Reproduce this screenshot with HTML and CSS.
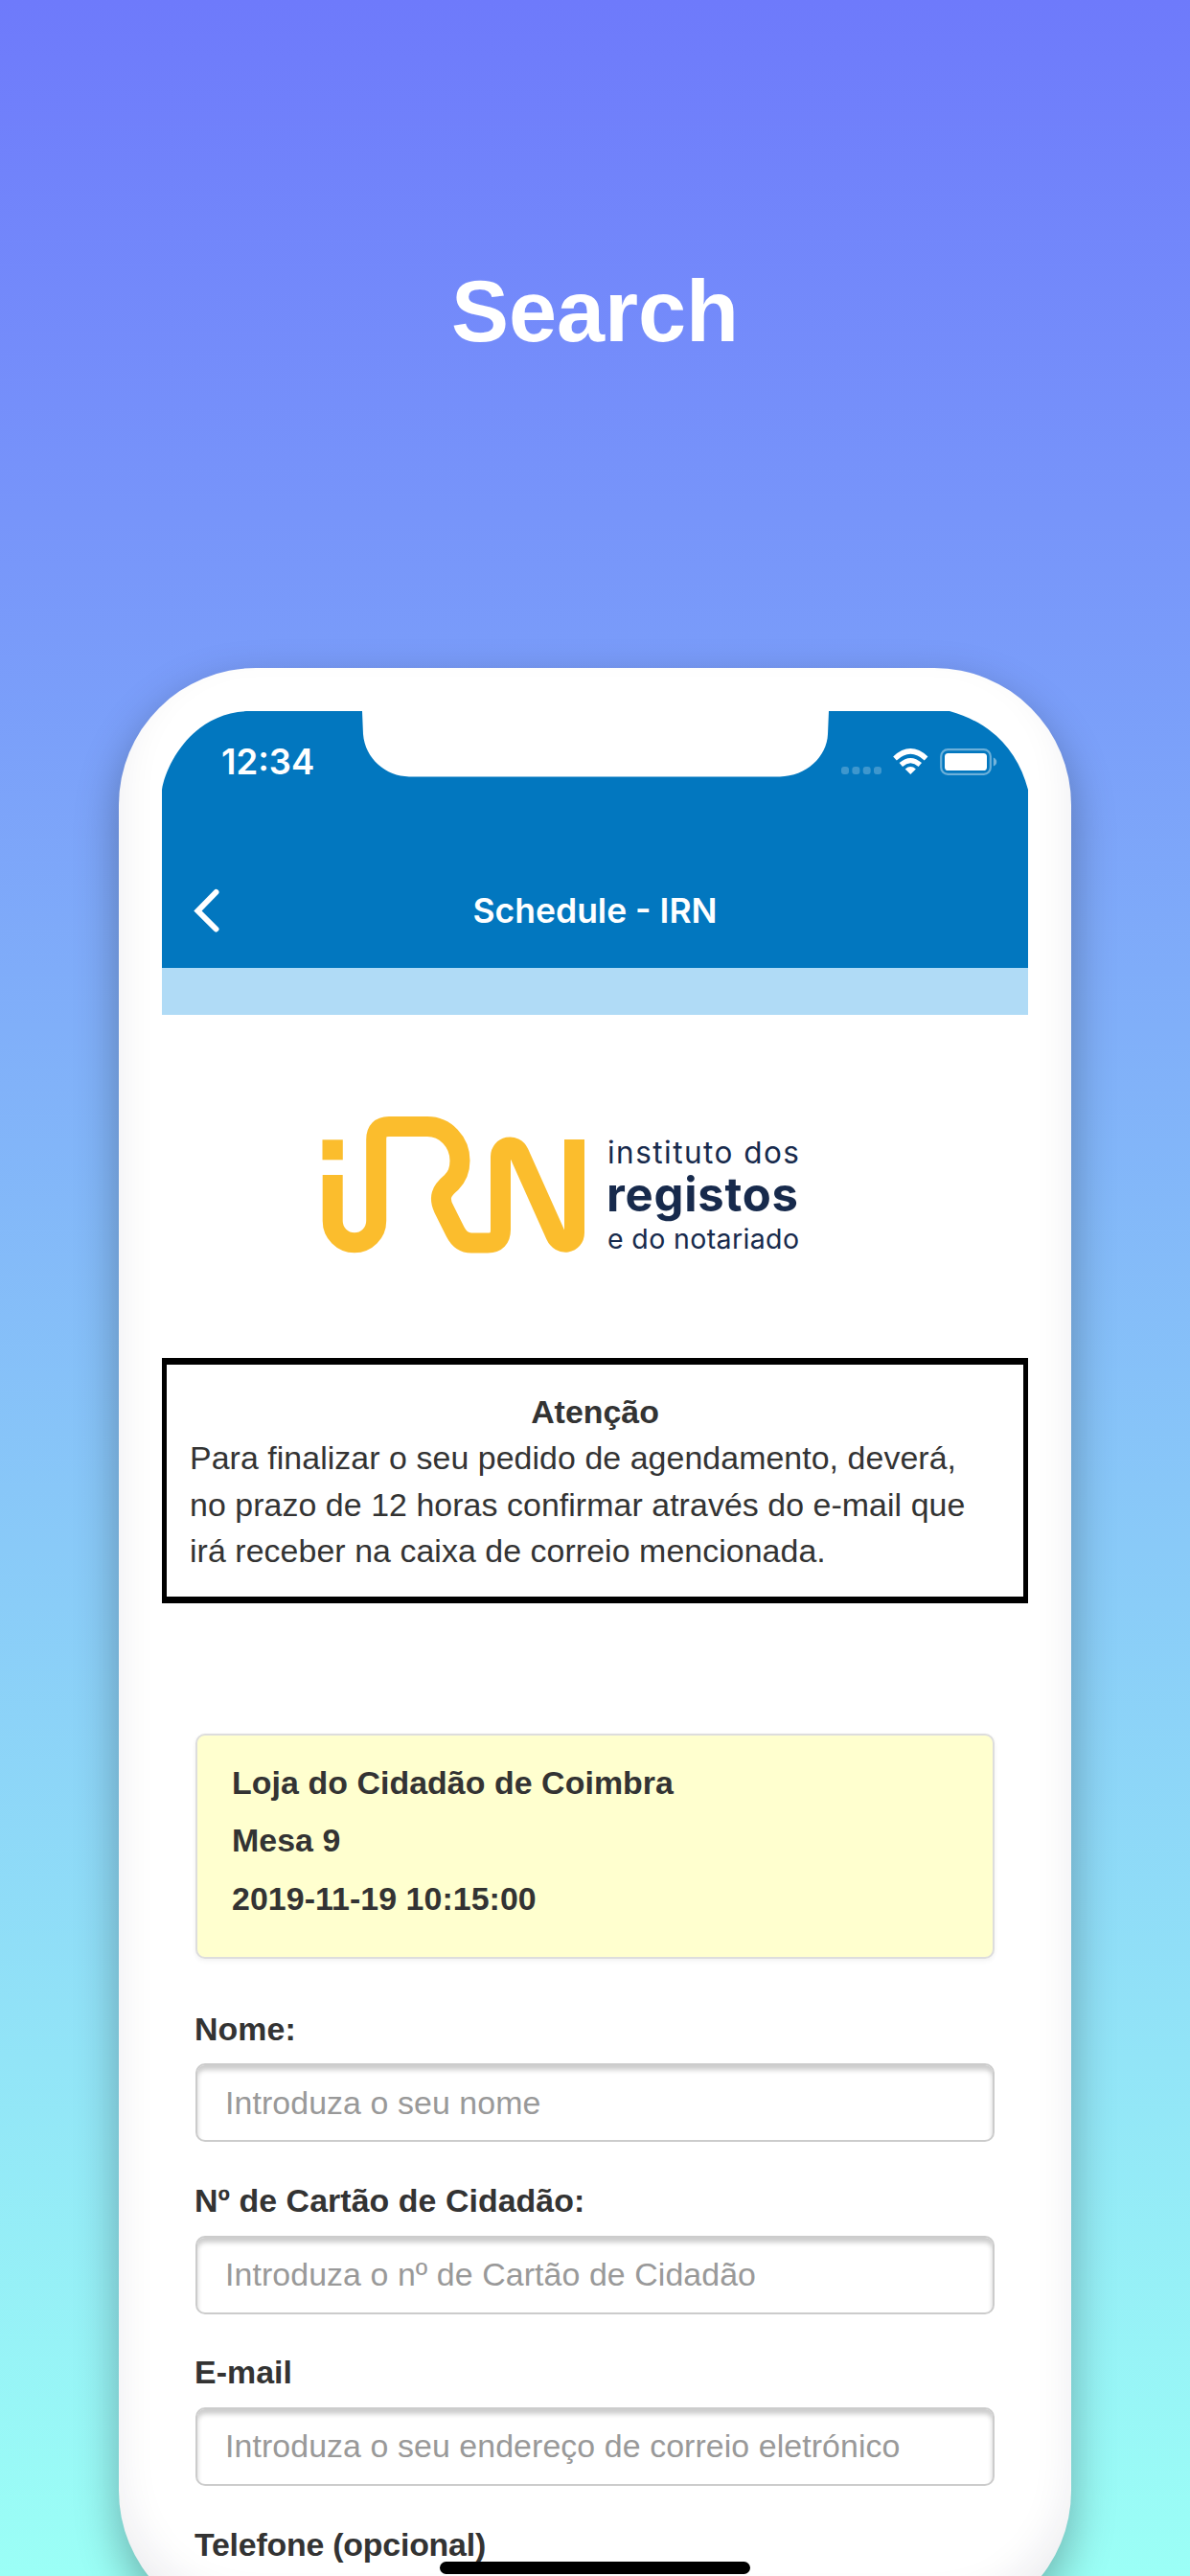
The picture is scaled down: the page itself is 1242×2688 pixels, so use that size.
FILE: index.html
```html
<!DOCTYPE html>
<html lang="pt">
<head>
<meta charset="utf-8">
<title>Schedule - IRN</title>
<link rel="stylesheet" href="styles.css">
</head>
<body>
<main class="stage">
  <h1 class="headline">Search</h1>
  <div class="phone">
    <div class="screen">
      <header class="topbar">
        <div class="status">
          <span class="clock">12:34</span>
          <svg class="status-icons" width="164" height="30" viewBox="0 0 164 30" aria-hidden="true">
            <g fill="#fff" fill-opacity=".24">
              <rect x="1" y="20" width="8" height="8" rx="3"/>
              <rect x="12.4" y="20" width="8" height="8" rx="3"/>
              <rect x="23.7" y="20" width="8" height="8" rx="3"/>
              <rect x="35" y="20" width="8" height="8" rx="3"/>
            </g>
            <path d="M73.300 28 L67.700 22.400 Q73.300 17.600 78.900 22.400 Z" fill="#fff"/>
            <path d="M63.300 18 Q73.300 9.200 83.300 18" fill="none" stroke="#fff" stroke-width="5.200"/>
            <path d="M57 11.400 Q73.300 -3.600 89.600 11.400" fill="none" stroke="#fff" stroke-width="5.400"/>
            <rect x="105.200" y="2.200" width="51.600" height="25.600" rx="7" fill="none" stroke="#fff" stroke-opacity=".42" stroke-width="2.200"/>
            <rect x="109" y="6" width="44" height="18" rx="3.600" fill="#fff"/>
            <path d="M159.800 10.500 Q163.200 12 163.200 15 Q163.200 18 159.800 19.500 Z" fill="#fff" fill-opacity=".45"/>
          </svg>
        </div>
        <div class="navbar">
          <svg class="back" width="30" height="48" viewBox="0 0 30 48" aria-hidden="true">
            <path d="M24.500 4 L5.500 23.500 L24.500 42.500" fill="none" stroke="#fff" stroke-width="6" stroke-linecap="round" stroke-linejoin="miter"/>
          </svg>
          <h2 class="nav-title">Schedule - IRN</h2>
        </div>
      </header>
      <div class="band"></div>
      <svg class="logo" width="904" height="358" viewBox="169 1059 904 358" role="img" aria-label="IRN">
        <g class="logo-mark">
          <path d="M336.500 1199.800 H357.800"/>
          <path d="M347.200 1226 V1274 A22.700 22.700 0 0 0 392.700 1274 V1189 Q392.700 1175.500 406 1175.500 H446 A34 35.500 0 0 1 480 1211 C480 1222 477 1228 471 1234 C460 1243 458 1250 463 1261 L475 1285 Q481 1297 492 1297 H509 Q522.500 1297 522.500 1283 V1207 C522.500 1196 537 1193 541.500 1203 L580 1289 C585 1300 599.500 1298 599.500 1286 V1189"/>
        </g>
        <g class="logo-text">
          <text x="634" y="1213.500" font-size="31.500" textLength="200">instituto dos</text>
          <text class="strong" x="633" y="1263.500" font-size="49" textLength="200">registos</text>
          <text x="634" y="1302.500" font-size="28.500" textLength="200">e do notariado</text>
        </g>
      </svg>
      <section class="notice">
        <strong class="notice-title">Atenção</strong>
        <p class="notice-text">Para finalizar o seu pedido de agendamento, deverá, no prazo de 12 horas confirmar através do e-mail que irá receber na caixa de correio mencionada.</p>
      </section>
      <section class="booking">
        <span>Loja do Cidadão de Coimbra</span>
        <span>Mesa 9</span>
        <span>2019-11-19 10:15:00</span>
      </section>
      <form class="form">
        <div class="field">
          <label for="nome">Nome:</label>
          <input id="nome" type="text" placeholder="Introduza o seu nome">
        </div>
        <div class="field">
          <label for="cartao">Nº de Cartão de Cidadão:</label>
          <input id="cartao" type="text" placeholder="Introduza o nº de Cartão de Cidadão">
        </div>
        <div class="field">
          <label for="email">E-mail</label>
          <input id="email" type="text" placeholder="Introduza o seu endereço de correio eletrónico">
        </div>
        <div class="field phone-field">
          <label>Telefone (opcional)</label>
        </div>
      </form>
    </div>
  </div>
  <div class="home-indicator"></div>
</main>
</body>
</html>
```
FILE: styles.css
```css
* { box-sizing: border-box; }

body {
  margin: 0;
  font-family: "Liberation Sans", Arial, sans-serif;
  color: #333;
}

.stage {
  position: relative;
  width: 1242px;
  height: 2688px;
  overflow: hidden;
  background: linear-gradient(#6e7afb, #9bfff6);
}

.headline {
  margin: 0;
  height: 697px;
  padding-top: 274px;
  font-size: 90px;
  line-height: 102px;
  font-weight: 700;
  text-align: center;
  color: #fff;
}

.phone {
  width: 994px;
  height: 2045px;
  margin: 0 auto;
  padding: 45px;
  border-radius: 143px;
  background: #fff;
  box-shadow: 0 18px 46px rgba(0, 0, 0, .3), inset 0 -24px 40px rgba(30, 30, 60, .08);
}

.screen { width: 904px; }

.topbar {
  height: 268.400px;
  background: #0277bf;
  clip-path: path("M0 82 C5 52 35 0 92 0 H209 L210 24 C212 50 234 68 258 68.400 H645 C672 68 694 48 695 24 L696 0 H822 C865 12 893 40 904 82 V268.400 H0 Z");
}

.status {
  display: flex;
  justify-content: space-between;
  align-items: flex-start;
  height: 172px;
  padding: 38px 32px 0 62px;
}

.clock {
  font: 600 36.500px/30px Inter, sans-serif;
  color: #fff;
}

.navbar {
  display: grid;
  grid-template-columns: 64px 1fr 64px;
  align-items: center;
  height: 74px;
}

.back { margin-left: 32px; }

.nav-title {
  margin: 0;
  font: 600 35.500px/44px Inter, sans-serif;
  text-align: center;
  color: #fff;
}

.band {
  height: 48.400px;
  background: #b0dbf6;
}

.logo {
  display: block;
}

.logo-mark {
  fill: none;
  stroke: #fbbd2d;
  stroke-width: 21;
}

.logo-text {
  font-family: Inter, sans-serif;
  fill: #172a4c;
}

.logo-text .strong { font-weight: 700; }

.notice {
  display: flex;
  flex-direction: column;
  height: 256.600px;
  padding: 25px 24px 0;
  border: solid #000;
  border-width: 7px 5px;
  font-size: 33.900px;
  line-height: 48.400px;
}

.notice-title { text-align: center; }

.notice-text {
  margin: 0;
  padding-right: 22px;
  letter-spacing: .060px;
}

.booking {
  display: flex;
  flex-direction: column;
  height: 235px;
  margin: 135.600px 35px 0;
  padding: 19px 36px;
  border: 2px solid #ddd;
  border-radius: 10px;
  background: #ffffcf;
  box-shadow: 0 2px 5px rgba(0, 0, 0, .06);
  font-size: 33.900px;
  line-height: 60.400px;
  font-weight: 700;
  letter-spacing: .060px;
}

.form {
  padding: 49px 35px 0;
}

.field {
  display: flex;
  flex-direction: column;
  gap: 12px;
  margin-bottom: 36.800px;
  font-size: 33.900px;
  line-height: 48.400px;
}

.field label {
  margin-left: -1px;
  font-weight: 700;
  letter-spacing: .060px;
}

.phone-field label { letter-spacing: -.220px; }

.field input {
  width: 100%;
  height: 82px;
  padding: 0 29px;
  border: 2px solid #ccc;
  border-radius: 10px;
  background: #fff;
  box-shadow: inset 0 5px 5px rgba(0, 0, 0, .2);
  font: inherit;
  letter-spacing: .080px;
}

.field input::placeholder {
  color: #999;
  opacity: 1;
}

.home-indicator {
  position: absolute;
  left: 459px;
  top: 2673px;
  width: 324px;
  height: 12.500px;
  border-radius: 7px;
  background: #000;
}
```
